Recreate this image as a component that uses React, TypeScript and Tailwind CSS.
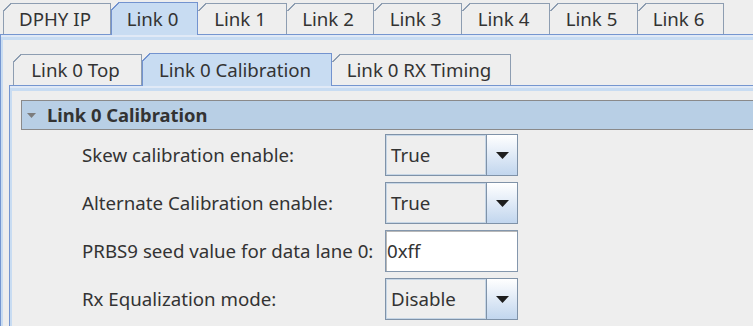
import clsx from "clsx";

type TabDef = { label: string; w: string; selected?: boolean; first?: boolean };

const outerTabs: TabDef[] = [
  { label: "DPHY IP", w: "w-[108px]", first: true },
  { label: "Link 0", w: "w-[87px]", selected: true },
  { label: "Link 1", w: "w-[89px]" },
  { label: "Link 2", w: "w-[87px]" },
  { label: "Link 3", w: "w-[88px]" },
  { label: "Link 4", w: "w-[88px]" },
  { label: "Link 5", w: "w-[88px]" },
  { label: "Link 6", w: "w-[86px]" },
];

const innerTabs: TabDef[] = [
  { label: "Link 0 Top", w: "w-[129px]", first: true },
  { label: "Link 0 Calibration", w: "w-[190px]", selected: true },
  { label: "Link 0 RX Timing", w: "w-[179px]" },
];

function Tab({ label, w, selected, first }: TabDef) {
  return (
    <div
      className={clsx(
        "relative flex shrink-0 items-center justify-center border-t border-r pr-[4px]",
        w,
        selected
          ? "z-10 -mb-px h-[33px] border-l border-[#7393cf] bg-[#c8dcf2]"
          : "h-[31px] border-[#8d9db1] bg-[#eeeeee]",
        first && "border-l"
      )}
    >
      {/* cut corner */}
      <div
        className={clsx(
          "absolute -top-px h-[8px] w-[8px]",
          selected || first ? "-left-px" : "left-0",
          selected
            ? "bg-[linear-gradient(to_bottom_right,#eeeeee_45%,#7393cf_45%,#7393cf_57%,transparent_57%)]"
            : "bg-[linear-gradient(to_bottom_right,#eeeeee_45%,#8d9db1_45%,#8d9db1_57%,transparent_57%)]"
        )}
      />
      {label}
    </div>
  );
}

function Combo({ value }: { value: string }) {
  return (
    <div className="flex h-[42px] w-[133px] border border-[#7f92a8]">
      <div className="flex flex-1 items-center border border-[#c6d6e6] bg-[#eeeeee] pl-[4px]">
        {value}
      </div>
      <div className="flex w-[31px] items-center justify-center border-l border-[#7f92a8] bg-gradient-to-b from-white to-[#c2d6ee]">
        <svg width="13" height="7" viewBox="0 0 13 7">
          <path d="M0 0H13L6.5 7Z" fill="#1e1e1e" />
        </svg>
      </div>
    </div>
  );
}

function TextField({ value }: { value: string }) {
  return (
    <div className="flex h-[42px] w-[133px] items-center border border-[#8497ad] bg-white pl-[1px] shadow-[inset_1px_1px_0_#b8b8b8]">
      {value}
    </div>
  );
}

const rows = [
  { label: "Skew calibration enable:", kind: "combo", value: "True" },
  { label: "Alternate Calibration enable:", kind: "combo", value: "True" },
  { label: "PRBS9 seed value for data lane 0:", kind: "text", value: "0xff" },
  { label: "Rx Equalization mode:", kind: "combo", value: "Disable" },
];

export default function App() {
  return (
    <div className="h-[326px] w-[753px] overflow-hidden bg-[#eeeeee] font-['Noto_Sans',sans-serif] text-[18.7px] leading-none text-[#333333]">
      {/* Outer tab strip */}
      <div className="flex h-[34px] items-end pl-[3px]">
        {outerTabs.map((t) => (
          <Tab key={t.label} {...t} />
        ))}
      </div>

      <div className="w-[800px] border-t border-l border-[#7596d0] pt-[5px] shadow-[inset_0_2px_0_#e0e9f6,inset_2px_5px_0_#c8dcf2]">
        <div className="ml-[8px]">
          {/* Inner tab strip */}
          <div className="flex h-[45px] items-end pl-[4px]">
            {innerTabs.map((t) => (
              <Tab key={t.label} {...t} />
            ))}
          </div>

          <div className="h-[260px] border-t border-l border-[#7596d0] pt-[14px] pl-[11px] shadow-[inset_0_2px_0_#e0e9f6,inset_2px_5px_0_#c8dcf2]">
            <div className="flex h-[30px] items-center gap-[11px] border border-[#8a8a8a] bg-[#b8cfe5] pl-[5px] text-[18.4px] font-bold">
              <svg width="9" height="5" viewBox="0 0 9 5">
                <path d="M0 0H9L4.5 5Z" fill="#7c7c7c" />
              </svg>
              <span>Link 0 Calibration</span>
            </div>

            <div className="mt-[4px] flex flex-col gap-[6px] pl-[61px]">
              {rows.map((r) => (
                <div key={r.label} className="flex items-center">
                  <div className="w-[303px]">{r.label}</div>
                  {r.kind === "combo" ? <Combo value={r.value} /> : <TextField value={r.value} />}
                </div>
              ))}
            </div>
          </div>
        </div>
      </div>
    </div>
  );
}
